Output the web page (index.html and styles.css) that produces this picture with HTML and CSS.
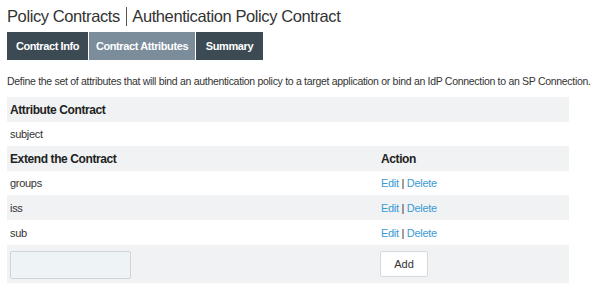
FILE: index.html
```html
<!DOCTYPE html>
<html lang="en">
<head>
    <meta charset="UTF-8">
    <title>Authentication Policy Contract</title>
    <link rel="stylesheet" href="styles.css">
</head>
<body>
    <h1 class="page-title">Policy Contracts <span class="divider"></span> Authentication Policy Contract</h1>

    <div class="tabs">
        <div class="tab tab-info">Contract Info</div>
        <div class="tab tab-attrs active">Contract Attributes</div>
        <div class="tab tab-summary">Summary</div>
    </div>

    <p class="description">Define the set of attributes that will bind an authentication policy to a target application or bind an IdP Connection to an SP Connection.</p>

    <table class="attributes">
        <tr class="head">
            <th colspan="2">Attribute Contract</th>
        </tr>
        <tr class="short">
            <td colspan="2">subject</td>
        </tr>
        <tr class="head">
            <th>Extend the Contract</th>
            <th class="action">Action</th>
        </tr>
        <tr class="short">
            <td>groups</td>
            <td class="action"><a href="#">Edit</a> | <a href="#">Delete</a></td>
        </tr>
        <tr class="shaded">
            <td>iss</td>
            <td class="action"><a href="#">Edit</a> | <a href="#">Delete</a></td>
        </tr>
        <tr>
            <td>sub</td>
            <td class="action"><a href="#">Edit</a> | <a href="#">Delete</a></td>
        </tr>
        <tr class="shaded add-row">
            <td><input type="text" class="new-attr"></td>
            <td class="action"><button type="button" class="add-btn">Add</button></td>
        </tr>
    </table>
</body>
</html>
```

FILE: styles.css
```css
body {
    font-family: "Liberation Sans", Arial, sans-serif;
    margin: 0;
    padding: 0 7px;
    color: #333;
}
.page-title {
    font-size: 16.5px;
    letter-spacing: -0.4px;
    font-weight: normal;
    margin: 5px 0 0;
    height: 22px;
    line-height: 22px;
    color: #333;
    white-space: nowrap;
}
.divider {
    display: inline-block;
    width: 1px;
    height: 19px;
    background-color: #555;
    vertical-align: -4px;
    margin: 0 2px;
}
.tabs {
    display: flex;
    gap: 1px;
    margin-top: 5px;
}
.tab {
    background-color: #3c4a54;
    color: #fff;
    font-size: 11px;
    letter-spacing: -0.4px;
    font-weight: bold;
    height: 28px;
    line-height: 28px;
    text-align: center;
    white-space: nowrap;
}
.tab-info {
    width: 81px;
}
.tab-attrs {
    width: 106px;
}
.tab-summary {
    width: 67px;
}
.tab.active {
    background-color: #7b8c9b;
}
.description {
    font-size: 10.5px;
    letter-spacing: -0.3px;
    margin: 14px 0 0;
    line-height: 14px;
    white-space: nowrap;
}
.attributes {
    width: 562px;
    border-collapse: collapse;
    margin-top: 9px;
    font-size: 11px;
    letter-spacing: -0.3px;
}
.attributes th,
.attributes td {
    text-align: left;
    padding: 0 3px;
    height: 25px;
}
.attributes .short td {
    height: 24px;
}
.attributes th {
    font-size: 12px;
    letter-spacing: -0.4px;
    font-weight: bold;
    color: #222;
}
.head,
.shaded {
    background-color: #f1f2f4;
}
.attributes .action {
    width: 185px;
    padding-left: 4px;
}
.attributes a {
    color: #3a9bd4;
    text-decoration: none;
}
.attributes .add-row td {
    height: 38px;
}
.new-attr {
    display: block;
    box-sizing: border-box;
    width: 121px;
    height: 28px;
    background-color: #eef3f6;
    border: 1px solid #cfd4d8;
    border-radius: 2px;
    margin-top: 1px;
}
.add-btn {
    display: block;
    box-sizing: border-box;
    width: 48px;
    height: 26px;
    background-color: #fff;
    border: 1px solid #d6d9dc;
    border-radius: 2px;
    font-family: "Liberation Sans", Arial, sans-serif;
    font-size: 11px;
    color: #333;
    margin-left: -1px;
}
```
